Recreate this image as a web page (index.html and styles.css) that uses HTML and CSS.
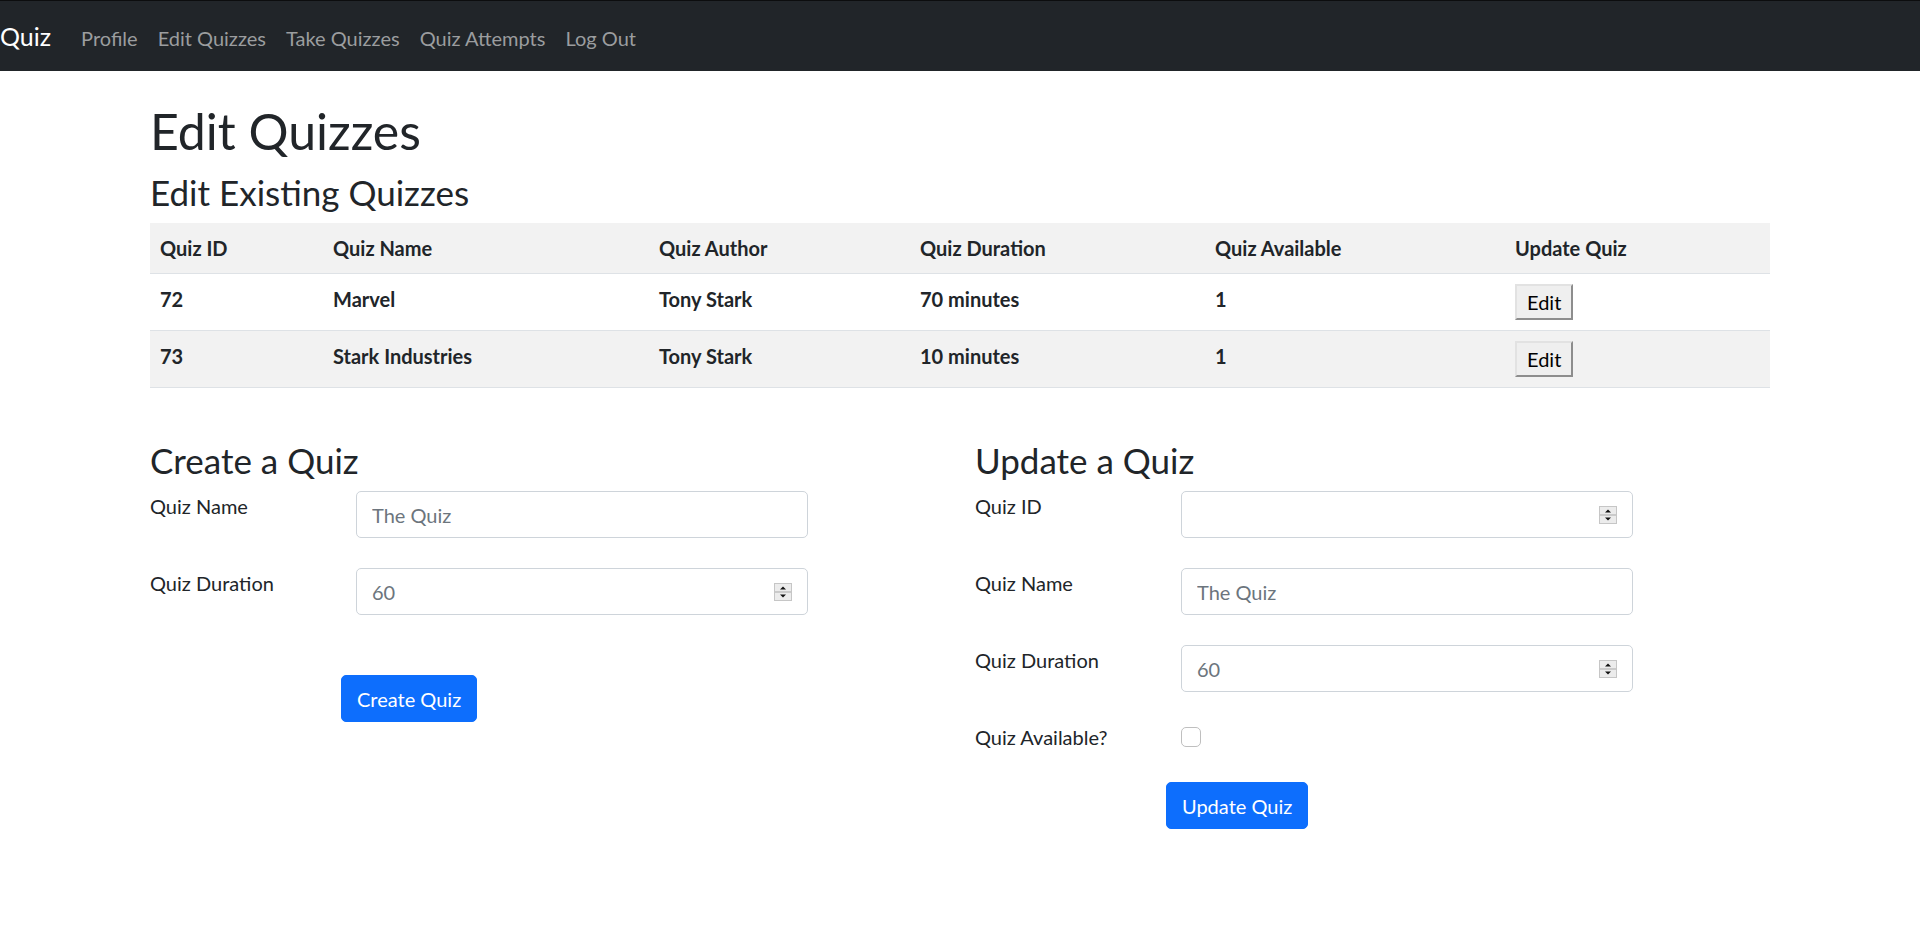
FILE: index.html
```html
<!DOCTYPE html>
<html lang="en">
<head>
<meta charset="utf-8">
<title>Edit Quizzes</title>
<link rel="stylesheet" href="styles.css">
</head>
<body>
<nav class="navbar">
  <a class="brand" href="#">Quiz</a>
  <ul class="nav-links">
    <li><a href="#">Profile</a></li>
    <li><a href="#">Edit Quizzes</a></li>
    <li><a href="#">Take Quizzes</a></li>
    <li><a href="#">Quiz Attempts</a></li>
    <li><a href="#">Log Out</a></li>
  </ul>
</nav>

<main class="container">
  <h1 class="title">Edit Quizzes</h1>
  <h3 class="subtitle">Edit Existing Quizzes</h3>

  <table class="quiz-table">
    <colgroup>
      <col class="c-id"><col class="c-name"><col class="c-author"><col class="c-duration"><col class="c-avail"><col class="c-update">
    </colgroup>
    <thead>
      <tr>
        <th>Quiz ID</th><th>Quiz Name</th><th>Quiz Author</th><th>Quiz Duration</th><th>Quiz Available</th><th>Update Quiz</th>
      </tr>
    </thead>
    <tbody>
      <tr>
        <td>72</td><td>Marvel</td><td>Tony Stark</td><td>70 minutes</td><td>1</td><td><button class="btn-edit" type="button">Edit</button></td>
      </tr>
      <tr>
        <td>73</td><td>Stark Industries</td><td>Tony Stark</td><td>10 minutes</td><td>1</td><td><button class="btn-edit" type="button">Edit</button></td>
      </tr>
    </tbody>
  </table>

  <div class="forms">
    <section class="form-col">
      <h3 class="subtitle">Create a Quiz</h3>
      <form class="form">
        <div class="form-row">
          <label class="form-label">Quiz Name</label>
          <input class="control" type="text" placeholder="The Quiz">
        </div>
        <div class="form-row">
          <label class="form-label">Quiz Duration</label>
          <div class="control number">
            <input class="bare" type="text" placeholder="60">
            <svg class="spin" width="18" height="18" viewBox="0 0 18 18"><rect x="0.5" y="0.5" width="17" height="17" fill="#ececec" stroke="#c6c6c6"/><line x1="1" y1="9" x2="17" y2="9" stroke="#a9a9a9"/><path d="M6 6.5h6L9 3.5z" fill="#111"/><path d="M6 11.5h6L9 14.5z" fill="#111"/></svg>
          </div>
        </div>
        <div class="form-actions spaced">
          <button class="btn-primary" type="button">Create Quiz</button>
        </div>
      </form>
    </section>

    <section class="form-col">
      <h3 class="subtitle">Update a Quiz</h3>
      <form class="form">
        <div class="form-row">
          <label class="form-label">Quiz ID</label>
          <div class="control number">
            <input class="bare" type="text">
            <svg class="spin" width="18" height="18" viewBox="0 0 18 18"><rect x="0.5" y="0.5" width="17" height="17" fill="#ececec" stroke="#c6c6c6"/><line x1="1" y1="9" x2="17" y2="9" stroke="#a9a9a9"/><path d="M6 6.5h6L9 3.5z" fill="#111"/><path d="M6 11.5h6L9 14.5z" fill="#111"/></svg>
          </div>
        </div>
        <div class="form-row">
          <label class="form-label">Quiz Name</label>
          <input class="control" type="text" placeholder="The Quiz">
        </div>
        <div class="form-row">
          <label class="form-label">Quiz Duration</label>
          <div class="control number">
            <input class="bare" type="text" placeholder="60">
            <svg class="spin" width="18" height="18" viewBox="0 0 18 18"><rect x="0.5" y="0.5" width="17" height="17" fill="#ececec" stroke="#c6c6c6"/><line x1="1" y1="9" x2="17" y2="9" stroke="#a9a9a9"/><path d="M6 6.5h6L9 3.5z" fill="#111"/><path d="M6 11.5h6L9 14.5z" fill="#111"/></svg>
          </div>
        </div>
        <div class="form-row">
          <label class="form-label">Quiz Available?</label>
          <div><input class="check" type="checkbox"></div>
        </div>
        <div class="form-actions">
          <button class="btn-primary" type="button">Update Quiz</button>
        </div>
      </form>
    </section>
  </div>
</main>
</body>
</html>
```

FILE: styles.css
```css
* { box-sizing: border-box; }

html, body {
  margin: 0;
  padding: 0;
  background: #fff;
}

body {
  font-family: Lato, "Open Sans", sans-serif;
  font-size: 20px;
  line-height: 30px;
  color: #212529;
}

/* Navbar */
.navbar {
  display: flex;
  align-items: center;
  height: 71px;
  border-top: 1px solid #0c0d0e;
  background: #212529;
}

.brand {
  font-size: 25px;
  line-height: 37.5px;
  padding: 7px 0 5px;
  margin-right: 20px;
  color: #fff;
  text-decoration: none;
}

.nav-links {
  display: flex;
  list-style: none;
  margin: 0;
  padding: 0;
}

.nav-links a {
  display: block;
  padding: 12px 10px 8px;
  font-size: 20px;
  line-height: 30px;
  color: #9b9d9f;
  text-decoration: none;
}

/* Content */
.container {
  width: 1620px;
  margin: 0 auto;
  padding-top: 30px;
}

.title {
  font-size: 50px;
  line-height: 60px;
  font-weight: 400;
  margin: 0 0 10px;
}

.subtitle {
  font-size: 35px;
  line-height: 42px;
  font-weight: 400;
  margin: 0 0 10px;
}

/* Table */
.quiz-table {
  width: 100%;
  table-layout: fixed;
  border-collapse: collapse;
  margin-bottom: 20px;
}

.c-id { width: 173px; }
.c-name { width: 326px; }
.c-author { width: 261px; }
.c-duration { width: 295px; }
.c-avail { width: 300px; }
.c-update { width: 265px; }

.quiz-table th,
.quiz-table td {
  padding: 10px;
  line-height: 30px;
  text-align: left;
  vertical-align: top;
  font-weight: 700;
  border-bottom: 1px solid #dee2e6;
}

.quiz-table thead tr,
.quiz-table tbody tr:nth-child(even) {
  background: #f2f2f2;
}

.btn-edit {
  font-family: inherit;
  font-size: 20px;
  font-weight: 400;
  line-height: 30px;
  height: 36px;
  padding: 0 10px;
  background: #efefef;
  color: #000;
  border: 2px solid;
  border-color: #e2e2e2 #8d8d8d #8d8d8d #e2e2e2;
  border-radius: 0;
}

/* Forms */
.forms {
  display: grid;
  grid-template-columns: 1fr 1fr;
  column-gap: 30px;
  padding-top: 31px;
}

.form { margin: 0; }

.form-row {
  display: grid;
  grid-template-columns: 176px 452px;
  column-gap: 30px;
  margin-bottom: 30px;
}

.form-label {
  font-size: 20px;
  line-height: 30px;
}

.control {
  width: 100%;
  height: 47px;
  border: 1px solid #ced4da;
  border-radius: 5px;
  padding: 0 15px;
  font-family: inherit;
  font-size: 20px;
  color: #212529;
  background: #fff;
}

.control::placeholder,
.bare::placeholder {
  color: #6c757d;
}

.number {
  display: flex;
  align-items: center;
  gap: 10px;
}

.bare {
  flex: 1;
  min-width: 0;
  border: 0;
  outline: 0;
  padding: 0;
  font-family: inherit;
  font-size: 20px;
  color: #212529;
  background: transparent;
}

.spin {
  flex: none;
  display: block;
}

.check {
  appearance: none;
  -webkit-appearance: none;
  display: block;
  width: 20px;
  height: 20px;
  margin: 5px 0 0;
  border: 1px solid #bfbfbf;
  border-radius: 5px;
  background: #fff;
}

.form-actions {
  padding-left: 191px;
}

.form-actions.spaced {
  padding-top: 30px;
}

.btn-primary {
  font-family: inherit;
  font-size: 20px;
  line-height: 30px;
  padding: 7.5px 15px;
  border: 1px solid #0d6efd;
  border-radius: 5px;
  background: #0d6efd;
  color: #fff;
}
```
